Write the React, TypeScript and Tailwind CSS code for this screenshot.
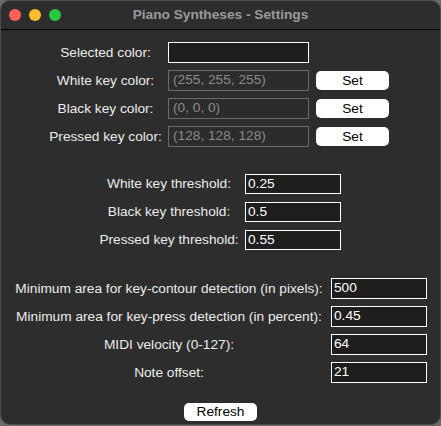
import React from 'react';

const font = { fontFamily: '"Liberation Sans", Arial, sans-serif' };

function ColorRow({ label, value, selected }: { label: string; value?: string; selected?: boolean }) {
  return (
    <>
      <div className="text-center text-[13.7px] text-[#ececec] leading-none">{label}</div>
      <div
        className={
          selected
            ? 'h-[21px] w-[141px] border border-white bg-[#1e1e1e]'
            : 'h-[21px] w-[141px] border border-[#6b6b6b] bg-[#2c2c2c] px-[4px] flex items-center text-[13.7px] text-[#8a8a8a]'
        }
      >
        {value}
      </div>
      {selected ? (
        <div />
      ) : (
        <button className="h-[19px] w-[73px] rounded-[5px] bg-white text-[13.7px] text-black leading-none">Set</button>
      )}
    </>
  );
}

function FieldRow({ label, value }: { label: string; value: string }) {
  return (
    <>
      <div className="text-center text-[13.7px] text-[#ececec] leading-none whitespace-nowrap">{label}</div>
      <div className="h-[21px] w-[96px] border border-white bg-[#1e1e1e] px-[2px] flex items-center text-[13.7px] text-white">
        {value}
      </div>
    </>
  );
}

export default function App() {
  return (
    <div className="w-[441px] h-[426px] bg-[#6a6a6a]" style={font}>
      <div className="w-[441px] h-[425px] rounded-[10px] border border-[#4e4e4e] bg-[#2d2d2d] overflow-hidden flex flex-col">
        <div className="h-[29px] flex items-center relative border-b border-black">
          <div className="flex gap-[8px] pl-[8px]">
            <span className="w-[12px] h-[12px] rounded-full bg-[#fe5f57]" />
            <span className="w-[12px] h-[12px] rounded-full bg-[#febc2e]" />
            <span className="w-[12px] h-[12px] rounded-full bg-[#28c840]" />
          </div>
          <div className="absolute inset-0 flex items-center justify-center text-[13.7px] font-bold text-[#9a9a9a]">
            Piano Syntheses - Settings
          </div>
        </div>

        <div className="pt-[12px] pl-[47px]">
          <div className="grid grid-cols-[115px_141px_73px] gap-x-[5px] gap-y-[7px] items-center [&>button]:ml-[2px]">
            <ColorRow label="Selected color:" selected />
            <ColorRow label="White key color:" value="(255, 255, 255)" />
            <ColorRow label="Black key color:" value="(0, 0, 0)" />
            <ColorRow label="Pressed key color:" value="(128, 128, 128)" />
          </div>
        </div>

        <div className="pt-[27px] pl-[98px]">
          <div className="grid grid-cols-[140px_96px] gap-x-[6px] gap-y-[8px] items-center [&>div:nth-child(even)]:h-[20px]">
            <FieldRow label="White key threshold:" value="0.25" />
            <FieldRow label="Black key threshold:" value="0.5" />
            <FieldRow label="Pressed key threshold:" value="0.55" />
          </div>
        </div>

        <div className="pt-[28px] pl-[11px]">
          <div className="grid grid-cols-[314px_96px] gap-x-[5px] gap-y-[7px] items-center">
            <FieldRow label="Minimum area for key-contour detection (in pixels):" value="500" />
            <FieldRow label="Minimum area for key-press detection (in percent):" value="0.45" />
            <FieldRow label="MIDI velocity (0-127):" value="64" />
            <FieldRow label="Note offset:" value="21" />
          </div>
        </div>

        <div className="pt-[20px] flex justify-center">
          <button className="h-[18px] w-[73px] rounded-[5px] bg-white text-[13.7px] text-black leading-none">Refresh</button>
        </div>
      </div>
    </div>
  );
}
